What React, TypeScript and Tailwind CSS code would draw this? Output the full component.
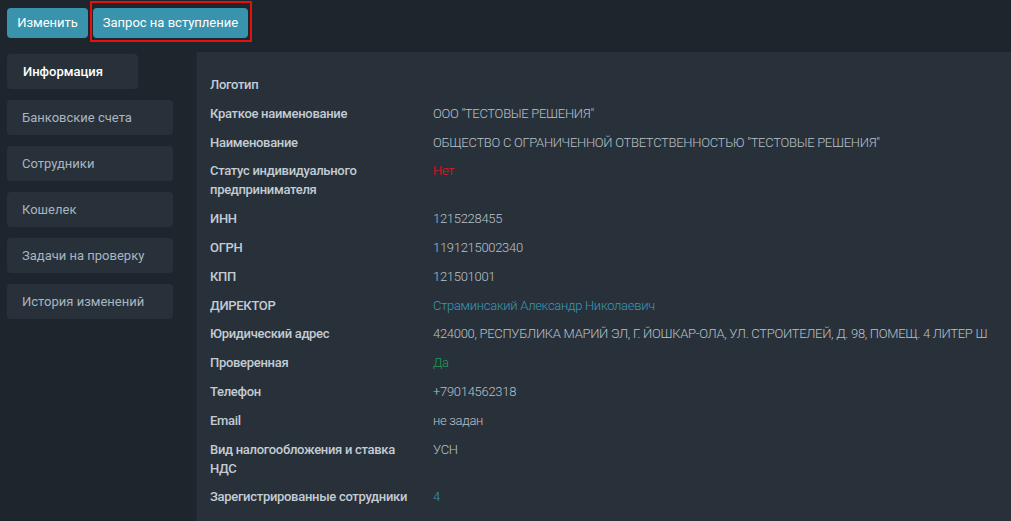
import { FC } from 'react';

interface Row {
  label: string;
  value: string;
  tone?: 'red' | 'green' | 'link';
}

const menu: string[] = [
  'Информация',
  'Банковские счета',
  'Сотрудники',
  'Кошелек',
  'Задачи на проверку',
  'История изменений',
];

const rows: Row[] = [
  { label: 'Логотип', value: '' },
  { label: 'Краткое наименование', value: 'ООО "ТЕСТОВЫЕ РЕШЕНИЯ"' },
  { label: 'Наименование', value: 'ОБЩЕСТВО С ОГРАНИЧЕННОЙ ОТВЕТСТВЕННОСТЬЮ "ТЕСТОВЫЕ РЕШЕНИЯ"' },
  { label: 'Статус индивидуального предпринимателя', value: 'Нет', tone: 'red' },
  { label: 'ИНН', value: '1215228455' },
  { label: 'ОГРН', value: '1191215002340' },
  { label: 'КПП', value: '121501001' },
  { label: 'ДИРЕКТОР', value: 'Страминсакий Александр Николаевич', tone: 'link' },
  { label: 'Юридический адрес', value: '424000, РЕСПУБЛИКА МАРИЙ ЭЛ, Г. ЙОШКАР-ОЛА, УЛ. СТРОИТЕЛЕЙ, Д. 98, ПОМЕЩ. 4 ЛИТЕР Ш' },
  { label: 'Проверенная', value: 'Да', tone: 'green' },
  { label: 'Телефон', value: '+79014562318' },
  { label: 'Email', value: 'не задан' },
  { label: 'Вид налогообложения и ставка НДС', value: 'УСН' },
  { label: 'Зарегистрированные сотрудники', value: '4', tone: 'link' },
];

const toneClass = (tone?: Row['tone']): string => {
  if (tone === 'red') return 'text-[#f0141c]';
  if (tone === 'green') return 'text-[#1f9a55]';
  if (tone === 'link') return 'text-[#3a97b4]';
  return 'text-[#b8c0c8]';
};

const App: FC = () => {
  return (
    <div
      className="min-h-[521px] w-full bg-[#1d262d] overflow-hidden text-[13px]"
      style={{ fontFamily: 'Roboto, "Liberation Sans", sans-serif' }}
    >
      {/* top buttons */}
      <div className="flex items-start gap-[5px] pl-[7px] pt-[8px] h-[52px]">
        <button className="h-[30px] w-[81px] rounded-[4px] bg-[#3a93ad] text-white text-[13px] whitespace-nowrap">
          Изменить
        </button>
        <div className="relative">
          <button className="h-[30px] w-[155px] rounded-[4px] bg-[#3a93ad] text-white text-[13px] whitespace-nowrap">
            Запрос на вступление
          </button>
          <span className="absolute left-[-3px] top-[-7px] w-[162px] h-[41px] border-2 border-[#e5100f]"></span>
        </div>
      </div>

      <div className="flex">
        {/* side menu */}
        <div className="w-[196px] shrink-0 flex flex-col gap-[11px] pl-[7px] pt-[2px]">
          {menu.map((item, i) => (
            <div
              key={item}
              className={`h-[35px] rounded-[4px] bg-[#28313a] flex items-center ${
                i === 0
                  ? 'w-[131px] pl-[16px] text-white font-medium'
                  : 'w-[166px] pl-[15px] text-[#a9b5c0]'
              }`}
            >
              {item}
            </div>
          ))}
        </div>

        {/* info panel */}
        <div className="flex-1 min-w-0 bg-[#28313a] border-l border-[#222b33] min-h-[469px] pl-[13px] pt-[23px]">
          <div className="flex flex-col gap-[9.8px]">
            {rows.map((row) => (
              <div key={row.label} className="flex leading-[19px]">
                <div className="w-[223px] shrink-0 pr-[14px] font-medium tracking-[-0.3px] text-[#c3ccd4]">
                  {row.label}
                </div>
                <div className={`font-light tracking-[-0.3px] whitespace-nowrap ${toneClass(row.tone)}`}>
                  {row.value}
                </div>
              </div>
            ))}
          </div>
        </div>
      </div>
    </div>
  );
};

export default App;
